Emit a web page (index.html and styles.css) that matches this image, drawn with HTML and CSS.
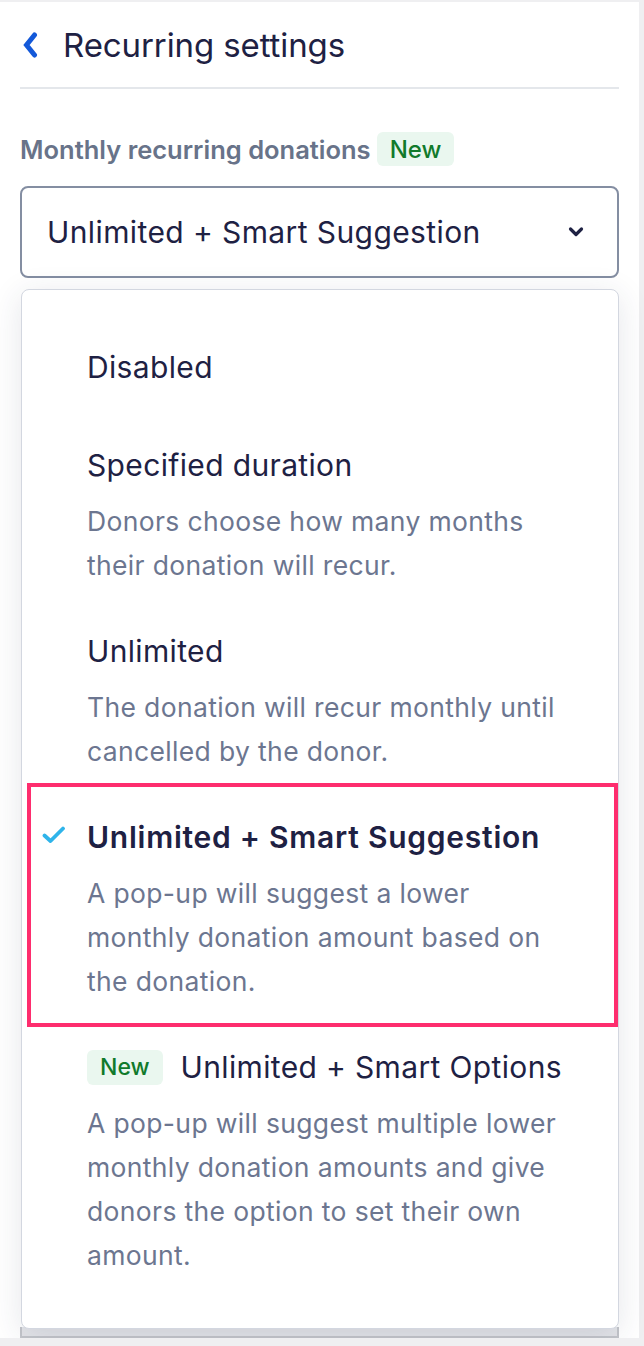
FILE: index.html
```html
<!DOCTYPE html>
<html>
<head>
<meta charset="utf-8">
<link rel="stylesheet" href="styles.css">
</head>
<body>
<div class="panel">
  <div class="header">
    <svg class="back" width="16" height="26" viewBox="0 0 16 26"><path d="M12.5 3 L4.5 13 L12.5 23" fill="none" stroke="#1459d9" stroke-width="5" stroke-linecap="round" stroke-linejoin="miter"/></svg>
    <h1 class="title">Recurring settings</h1>
  </div>
  <div class="label-row">
    <span class="label">Monthly recurring donations</span>
    <span class="badge">New</span>
  </div>
  <div class="select">
    <span class="select-value">Unlimited + Smart Suggestion</span>
    <svg class="caret" width="16" height="12" viewBox="0 0 16 12"><path d="M2.5 3 L8 8.5 L13.5 3" fill="none" stroke="#1e2143" stroke-width="3.2" stroke-linecap="round" stroke-linejoin="round"/></svg>
  </div>
  <div class="menu-wrap">
    <div class="menu">
      <div class="item item-plain">
        <div class="item-title">Disabled</div>
      </div>
      <div class="item">
        <div class="item-title">Specified duration</div>
        <div class="item-desc">Donors choose how many months their donation will recur.</div>
      </div>
      <div class="item">
        <div class="item-title">Unlimited</div>
        <div class="item-desc">The donation will recur monthly until cancelled by the donor.</div>
      </div>
      <div class="item item-selected">
        <svg class="check" width="24" height="20" viewBox="0 0 24 20"><path d="M2.5 10.5 L8.5 16 L21 3.5" fill="none" stroke="#2fb4ea" stroke-width="3.8" stroke-linecap="round" stroke-linejoin="round"/></svg>
        <div class="item-title strong">Unlimited + Smart Suggestion</div>
        <div class="item-desc">A pop-up will suggest a lower monthly donation amount based on the donation.</div>
      </div>
      <div class="item">
        <div class="item-title"><span class="badge badge-sm">New</span><span>Unlimited + Smart Options</span></div>
        <div class="item-desc">A pop-up will suggest multiple lower monthly donation amounts and give donors the option to set their own amount.</div>
      </div>
    </div>
    <div class="under"></div>
  </div>
</div>
</body>
</html>
```
FILE: styles.css
```css
* { box-sizing: border-box; }
html, body { margin: 0; padding: 0; }
body {
  background: #efeff1;
  font-family: Inter, "Noto Sans", sans-serif;
  color: #1e2143;
}
.panel {
  width: 639px;
  margin-top: 2px;
  background: #ffffff;
  padding: 0 20px;
}
.header {
  display: flex;
  align-items: center;
  height: 87px;
  border-bottom: 2px solid #e4e7eb;
}
.back { margin-left: 2px; margin-right: 25px; flex: none; }
.title {
  margin: 0;
  font-size: 33px;
  font-weight: 400;
  color: #1e2143;
  letter-spacing: -0.1px;
}
.label-row {
  display: flex;
  align-items: center;
  gap: 6px;
  margin-top: 43px;
  height: 34px;
}
.label {
  font-size: 25.5px;
  font-weight: 600;
  color: #687389;
  letter-spacing: 0;
}
.badge {
  display: inline-flex;
  align-items: center;
  justify-content: center;
  background: #eaf7ef;
  color: #117a2b;
  font-size: 24px;
  font-weight: 500;
  height: 34px;
  padding: 0 13px;
  border-radius: 6px;
}
.select {
  margin-top: 20px;
  height: 92px;
  border: 2px solid #848ea2;
  border-radius: 8px;
  display: flex;
  align-items: center;
  justify-content: space-between;
  padding: 0 33px 0 25px;
}
.select-value {
  font-size: 30px;
  letter-spacing: 0.4px;
  color: #1e2143;
}
.menu-wrap {
  position: relative;
  margin-top: 11px;
}
.menu {
  position: relative;
  z-index: 1;
  margin-left: 1px;
  border: 1px solid #d3d7e0;
  border-radius: 8px;
  background: #ffffff;
  box-shadow: 0 6px 32px rgba(40, 50, 80, 0.12);
  padding: 34px 0 30px;
}
.item {
  position: relative;
  padding: 21px 48px 21px 65px;
}
.item-plain { padding-bottom: 33px; }
.item-title {
  font-size: 30px;
  letter-spacing: 0.35px;
  line-height: 44px;
  color: #1e2143;
  display: flex;
  align-items: center;
  gap: 18px;
}
.item-title.strong { font-weight: 600; letter-spacing: 0.75px; }
.item-desc {
  margin-top: 12px;
  font-size: 26.5px;
  letter-spacing: 0.35px;
  line-height: 44px;
  color: #6c7690;
}
.item-selected::after {
  content: "";
  position: absolute;
  left: 5px;
  right: 0;
  top: -11px;
  bottom: -3px;
  border: 4px solid #fe2d6e;
  pointer-events: none;
}
.check {
  position: absolute;
  left: 20px;
  top: 31px;
}
.badge-sm {
  height: 35px;
  font-size: 23px;
  letter-spacing: 0;
  padding: 0 13px;
}
.under {
  margin-top: -2px;
  height: 11px;
  border: 2px solid #c3c5ca;
  border-top: none;
  background: #e3e4e8;
}
```
